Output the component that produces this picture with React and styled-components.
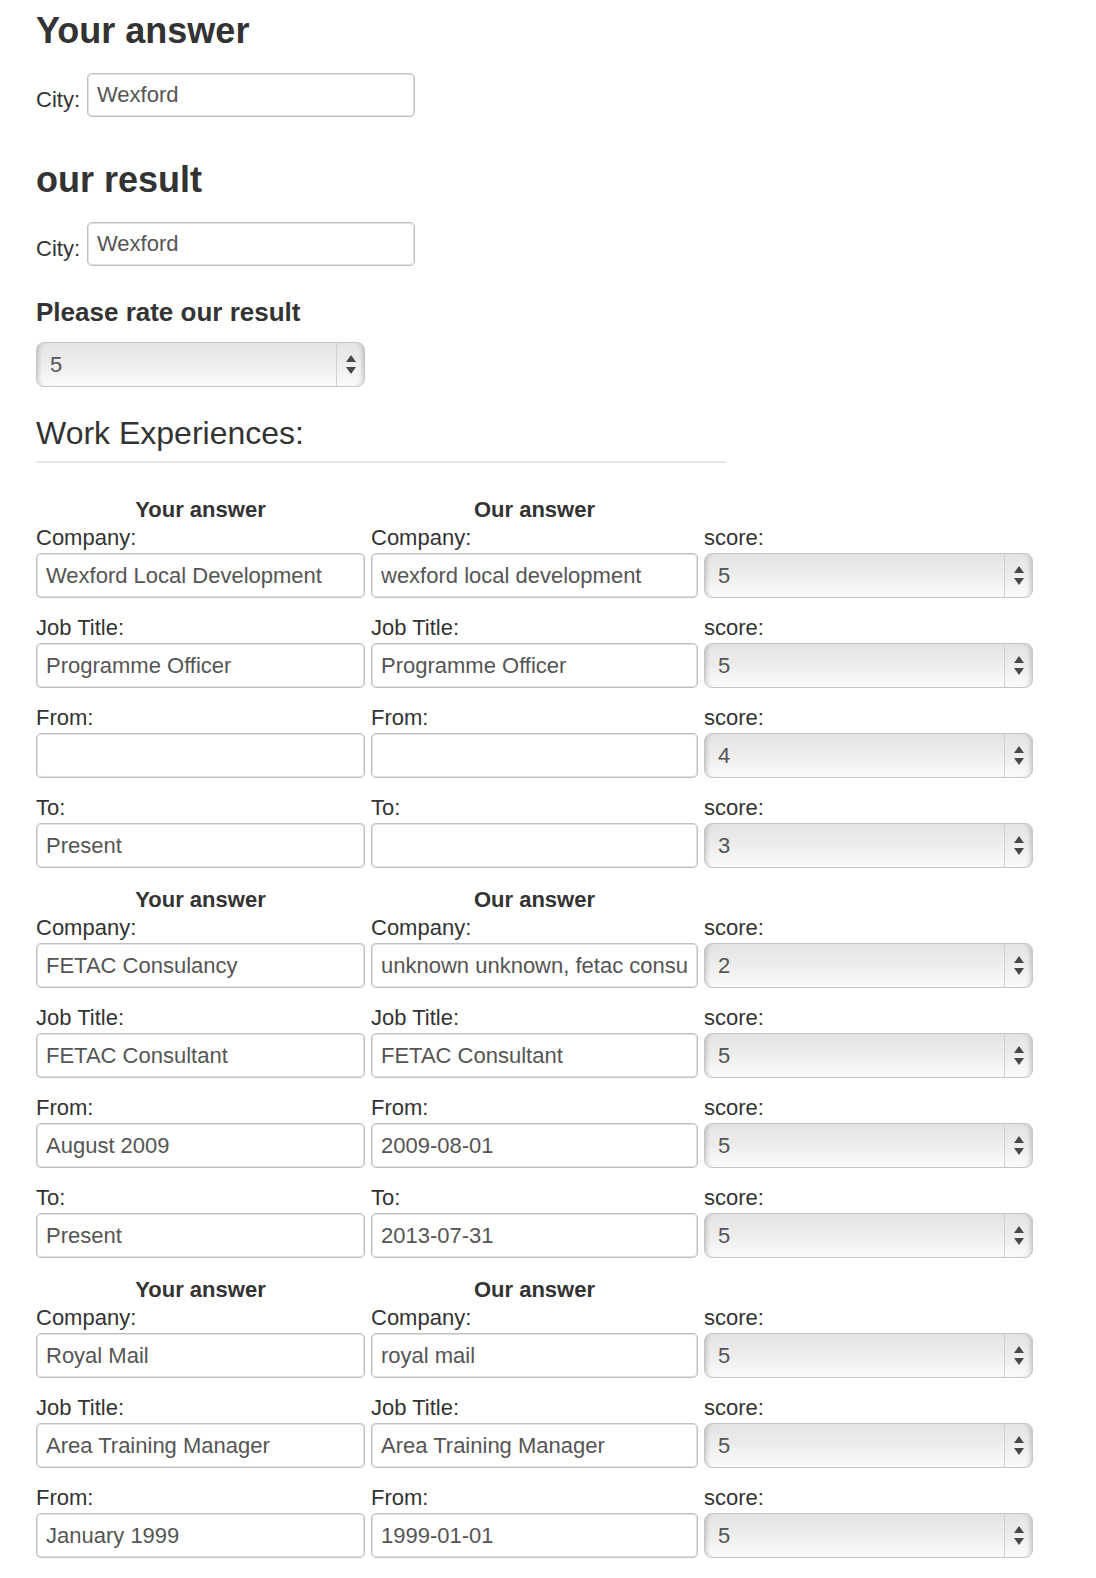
import React from "react";
import styled, { createGlobalStyle } from "styled-components";

// data
const experiences = [
  [
    { label: "Company", yours: "Wexford Local Development", ours: "wexford local development", score: 5 },
    { label: "Job Title", yours: "Programme Officer", ours: "Programme Officer", score: 5 },
    { label: "From", yours: "", ours: "", score: 4 },
    { label: "To", yours: "Present", ours: "", score: 3 },
  ],
  [
    { label: "Company", yours: "FETAC Consulancy", ours: "unknown unknown, fetac consultancy", score: 2 },
    { label: "Job Title", yours: "FETAC Consultant", ours: "FETAC Consultant", score: 5 },
    { label: "From", yours: "August 2009", ours: "2009-08-01", score: 5 },
    { label: "To", yours: "Present", ours: "2013-07-31", score: 5 },
  ],
  [
    { label: "Company", yours: "Royal Mail", ours: "royal mail", score: 5 },
    { label: "Job Title", yours: "Area Training Manager", ours: "Area Training Manager", score: 5 },
    { label: "From", yours: "January 1999", ours: "1999-01-01", score: 5 },
  ],
];

function Arrows() {
  return (
    <ArrowBox>
      <svg width="10" height="19" viewBox="0 0 10 19">
        <polygon points="5,0 10,7 0,7" fill="#484848" />
        <polygon points="0,12 10,12 5,19" fill="#484848" />
      </svg>
    </ArrowBox>
  );
}

function ScoreSelect({ value, width }) {
  return (
    <SelectBox $width={width}>
      <SelectValue>{value}</SelectValue>
      <Arrows />
    </SelectBox>
  );
}

function Field({ label, value }) {
  return (
    <FieldCell>
      <FieldLabel>{label}:</FieldLabel>
      <TextInput type="text" readOnly defaultValue={value} />
    </FieldCell>
  );
}

export default function App() {
  return (
    <Page>
      <GlobalStyle />
      <Title>Your answer</Title>
      <CityRow>
        <CityLabel>City:</CityLabel>
        <CityInput type="text" readOnly defaultValue="Wexford" />
      </CityRow>

      <Title $gap={43}>our result</Title>
      <CityRow>
        <CityLabel>City:</CityLabel>
        <CityInput type="text" readOnly defaultValue="Wexford" />
      </CityRow>

      <RateHeading>Please rate our result</RateHeading>
      <RateSelectWrap>
        <ScoreSelect value={5} width="329px" />
      </RateSelectWrap>

      <SectionTitle>Work Experiences:</SectionTitle>
      <Divider />

      {experiences.map((rows, i) => (
        <Block key={i}>
          <ColumnHead>Your answer</ColumnHead>
          <ColumnHead>Our answer</ColumnHead>
          <ColumnHead />
          {rows.map((row) => (
            <React.Fragment key={row.label}>
              <Field label={row.label} value={row.yours} />
              <Field label={row.label} value={row.ours} />
              <FieldCell>
                <FieldLabel>score:</FieldLabel>
                <ScoreSelect value={row.score} />
              </FieldCell>
            </React.Fragment>
          ))}
        </Block>
      ))}
    </Page>
  );
}

// styles
const GlobalStyle = createGlobalStyle`
  html, body {
    margin: 0;
    padding: 0;
    background: #fff;
  }
  body {
    font-family: "Liberation Sans", Arial, Helvetica, sans-serif;
    color: #333;
  }
`;

const Page = styled.div`
  padding: 11px 36px 0 36px;
`;

const Title = styled.h1`
  margin: ${(p) => (p.$gap ? `${p.$gap}px` : "0")} 0 0 0;
  font-size: 36px;
  line-height: 40px;
  font-weight: bold;
  color: #333;
`;

const CityRow = styled.div`
  display: flex;
  align-items: flex-end;
  gap: 7px;
  margin-top: 22px;
`;

const CityLabel = styled.label`
  font-size: 22px;
  line-height: 26px;
  padding-bottom: 4px;
  color: #333;
`;

const inputLook = `
  box-sizing: border-box;
  height: 45px;
  margin: 0;
  padding: 0 9px;
  border: 1px solid #bfbfbf;
  border-radius: 5px;
  box-shadow: inset 0 0 0 1px #e2e2e2;
  background: #fff;
  font-family: "Liberation Sans", Arial, Helvetica, sans-serif;
  font-size: 22px;
  line-height: 43px;
  color: #555;
  outline: none;
`;

const CityInput = styled.input`
  ${inputLook}
  width: 328px;
  height: 44px;
`;

const TextInput = styled.input`
  ${inputLook}
  width: 100%;
`;

const RateHeading = styled.h3`
  margin: 31px 0 0 0;
  font-size: 26px;
  line-height: 30px;
  font-weight: bold;
  color: #333;
`;

const RateSelectWrap = styled.div`
  margin-top: 15px;
`;

const SelectBox = styled.div`
  box-sizing: border-box;
  width: ${(p) => p.$width || "100%"};
  height: 45px;
  display: flex;
  border: 1px solid #c6c6c6;
  border-radius: 8px;
  background: linear-gradient(to bottom, #e4e4e4 0%, #ececec 45%, #f7f7f7 85%, #fbfbfb 100%);
  box-shadow: inset 5px 0 5px -4px rgba(0, 0, 0, 0.22),
    inset -5px 0 5px -4px rgba(0, 0, 0, 0.22);
  color: #555;
  font-size: 22px;
`;

const SelectValue = styled.span`
  flex: 1;
  padding-left: 13px;
  line-height: 43px;
`;

const ArrowBox = styled.div`
  width: 27px;
  border-left: 1px solid #d2d2d2;
  display: flex;
  align-items: center;
  justify-content: center;
`;

const SectionTitle = styled.h2`
  margin: 28px 0 0 0;
  font-size: 32px;
  line-height: 36px;
  font-weight: normal;
  color: #333;
`;

const Divider = styled.hr`
  width: 690px;
  height: 2px;
  margin: 10px 0 33px 0;
  border: 0;
  background: #e6e6e6;
`;

const Block = styled.section`
  display: grid;
  grid-template-columns: 329px 327px 329px;
  column-gap: 6px;
  margin-bottom: 3px;
`;

const ColumnHead = styled.div`
  font-size: 22px;
  line-height: 27px;
  font-weight: bold;
  text-align: center;
  color: #333;
`;

const FieldCell = styled.div`
  display: flex;
  flex-direction: column;
  margin-bottom: 15px;
`;

const FieldLabel = styled.label`
  font-size: 22px;
  line-height: 30px;
  color: #333;
`;
